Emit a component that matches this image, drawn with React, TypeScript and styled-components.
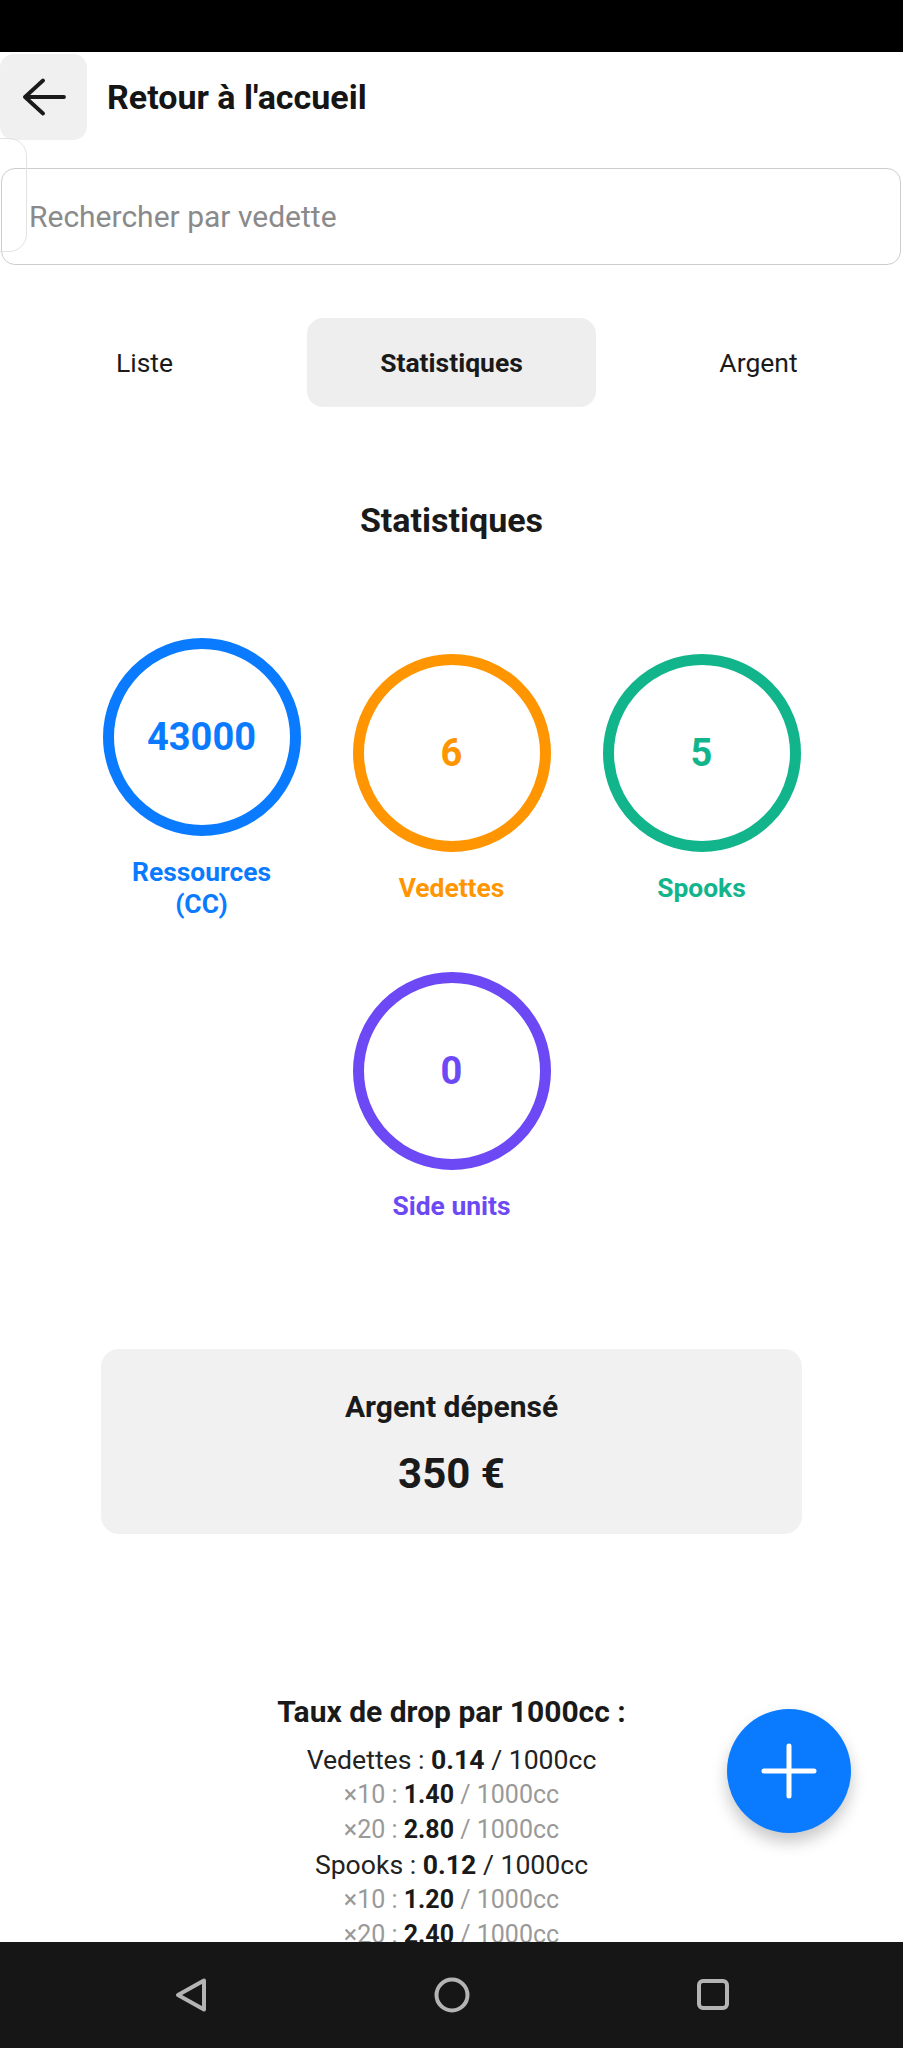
import React from "react";
import styled, { createGlobalStyle } from "styled-components";

const GlobalStyle = createGlobalStyle`
  html, body {
    margin: 0;
    padding: 0;
    background: #ffffff;
  }
  body {
    font-family: Roboto, "Noto Sans", "Liberation Sans", Arial, sans-serif;
    -webkit-font-smoothing: antialiased;
  }
  * { box-sizing: border-box; }
`;

const Screen = styled.div`
  position: relative;
  width: 903px;
  height: 2048px;
  display: flex;
  flex-direction: column;
  overflow: hidden;
  background: #ffffff;
`;

const StatusBar = styled.div`
  flex: 0 0 52px;
  background: #000000;
`;

const Content = styled.main`
  position: relative;
  flex: 1 1 auto;
  min-height: 0;
  overflow: hidden;
  display: flex;
  flex-direction: column;
  & > * {
    flex-shrink: 0;
  }
`;

const Header = styled.header`
  display: flex;
  align-items: center;
  gap: 20px;
  padding-top: 2px;
`;

const BackButton = styled.button`
  width: 87px;
  height: 86px;
  border: none;
  border-radius: 14px;
  background: #f0f0f0;
  display: flex;
  align-items: center;
  justify-content: center;
  padding: 0;
  cursor: pointer;
`;

const Title = styled.h1`
  margin: 0;
  font-size: 34px;
  font-weight: 700;
  color: #151515;
  line-height: 40px;
`;

const EdgeTrace = styled.div`
  position: absolute;
  left: -40px;
  top: 86px;
  width: 67px;
  height: 114px;
  border: 1.5px solid #e2e2e2;
  border-radius: 18px;
  pointer-events: none;
`;

const SearchInput = styled.input`
  display: block;
  width: 900px;
  height: 97px;
  margin: 28px 0 0 1px;
  padding: 0 27px;
  border: 1.5px solid #cdcdcd;
  border-radius: 14px;
  background: transparent;
  font-family: Roboto, "Noto Sans", Arial, sans-serif;
  font-size: 30px;
  color: #222222;
  outline: none;
  &::placeholder {
    color: #8a8a8a;
  }
`;

const Tabs = styled.nav`
  display: grid;
  grid-template-columns: repeat(3, 289px);
  column-gap: 18px;
  margin-top: 53px;
`;

const Tab = styled.button<{ $active?: boolean }>`
  height: 89px;
  border: none;
  border-radius: 16px;
  background: ${(p) => (p.$active ? "#eeeeee" : "transparent")};
  font-family: Roboto, "Noto Sans", Arial, sans-serif;
  font-size: 26.5px;
  font-weight: ${(p) => (p.$active ? 700 : 400)};
  color: #1a1a1a;
  padding: 0;
`;

const SectionTitle = styled.h2`
  margin: 93px 0 0;
  text-align: center;
  font-size: 34px;
  line-height: 41px;
  font-weight: 700;
  color: #1a1a1a;
`;

const StatsGrid = styled.section`
  display: flex;
  flex-wrap: wrap;
  justify-content: center;
  align-items: center;
  margin-top: 71px;
`;

const StatItem = styled.div`
  width: 198px;
  margin: 26px;
  display: flex;
  flex-direction: column;
  align-items: center;
`;

const Ring = styled.div<{ $color: string }>`
  width: 198px;
  height: 198px;
  border-radius: 50%;
  border: 11px solid ${(p) => p.$color};
  display: flex;
  align-items: center;
  justify-content: center;
  font-size: 38px;
  font-weight: 700;
  color: ${(p) => p.$color};
`;

const StatLabel = styled.div<{ $color: string }>`
  margin-top: 20px;
  max-width: 180px;
  text-align: center;
  font-size: 26.4px;
  line-height: 32px;
  font-weight: 700;
  color: ${(p) => p.$color};
`;

const MoneyCard = styled.section`
  margin: 101px 101px 0;
  padding: 40px 0 36px;
  border-radius: 18px;
  background: #f1f1f1;
  text-align: center;
`;

const MoneyTitle = styled.div`
  font-size: 30px;
  line-height: 35px;
  font-weight: 700;
  color: #1a1a1a;
`;

const MoneyValue = styled.div`
  margin-top: 26px;
  font-size: 42px;
  line-height: 48px;
  font-weight: 700;
  color: #1a1a1a;
`;

const DropSection = styled.section`
  margin-top: 159px;
  text-align: center;
`;

const DropTitle = styled.div`
  font-size: 30px;
  line-height: 37px;
  font-weight: 700;
  color: #1a1a1a;
  margin-bottom: 12px;
`;

const DropLine = styled.div<{ $sub?: boolean }>`
  font-size: ${(p) => (p.$sub ? "25px" : "26.6px")};
  line-height: 35px;
  color: ${(p) => (p.$sub ? "#999999" : "#222222")};
`;

const Strong = styled.b`
  font-weight: 700;
  color: #1a1a1a;
`;

const Fab = styled.button`
  position: absolute;
  right: 52px;
  bottom: 215px;
  width: 124px;
  height: 124px;
  border-radius: 50%;
  border: none;
  background: #0a7bff;
  box-shadow: 0 9px 16px rgba(0, 0, 0, 0.22);
  display: flex;
  align-items: center;
  justify-content: center;
  padding: 0;
`;

const NavBar = styled.footer`
  flex: 0 0 106px;
  background: #161616;
  display: flex;
  justify-content: center;
  align-items: center;
`;

const NavSlot = styled.div`
  width: 261px;
  display: flex;
  justify-content: center;
  align-items: center;
`;

type Stat = { value: string; label: string; color: string };

const stats: Stat[] = [
  { value: "43000", label: "Ressources (CC)", color: "#0a7bff" },
  { value: "6", label: "Vedettes", color: "#ff9500" },
  { value: "5", label: "Spooks", color: "#12b58b" },
  { value: "0", label: "Side units", color: "#6c49f5" },
];

type Drop = { label: string; value: string; sub?: boolean };

const drops: Drop[] = [
  { label: "Vedettes", value: "0.14" },
  { label: "×10", value: "1.40", sub: true },
  { label: "×20", value: "2.80", sub: true },
  { label: "Spooks", value: "0.12" },
  { label: "×10", value: "1.20", sub: true },
  { label: "×20", value: "2.40", sub: true },
];

const ArrowBack = () => (
  <svg width="44" height="38" viewBox="0 0 44 38" fill="none">
    <path
      d="M42 19H3M21 2.5L3 19l18 16.5"
      stroke="#1a1a1a"
      strokeWidth="3.8"
      strokeLinecap="round"
      strokeLinejoin="round"
    />
  </svg>
);

const PlusIcon = () => (
  <svg width="56" height="56" viewBox="0 0 56 56" fill="none">
    <path d="M28 3v50M3 28h50" stroke="#ffffff" strokeWidth="5" strokeLinecap="round" />
  </svg>
);

const NavBackIcon = () => (
  <svg width="36" height="38" viewBox="0 0 36 38" fill="none">
    <path
      d="M31 4.5L5 19l26 14.5z"
      stroke="#b4b4b4"
      strokeWidth="4"
      strokeLinejoin="round"
    />
  </svg>
);

const NavHomeIcon = () => (
  <svg width="38" height="38" viewBox="0 0 38 38" fill="none">
    <circle cx="19" cy="19" r="15.5" stroke="#b4b4b4" strokeWidth="4" />
  </svg>
);

const NavRecentIcon = () => (
  <svg width="36" height="36" viewBox="0 0 36 36" fill="none">
    <rect x="4" y="4" width="28" height="27" rx="4" stroke="#b4b4b4" strokeWidth="4" />
  </svg>
);

export default function App() {
  return (
    <>
      <GlobalStyle />
      <Screen>
        <StatusBar />
        <Content>
          <Header>
            <BackButton aria-label="Retour">
              <ArrowBack />
            </BackButton>
            <Title>Retour à l'accueil</Title>
          </Header>
          <EdgeTrace />
          <SearchInput placeholder="Rechercher par vedette" />
          <Tabs>
            <Tab>Liste</Tab>
            <Tab $active>Statistiques</Tab>
            <Tab>Argent</Tab>
          </Tabs>
          <SectionTitle>Statistiques</SectionTitle>
          <StatsGrid>
            {stats.map((s) => (
              <StatItem key={s.label}>
                <Ring $color={s.color}>{s.value}</Ring>
                <StatLabel $color={s.color}>{s.label}</StatLabel>
              </StatItem>
            ))}
          </StatsGrid>
          <MoneyCard>
            <MoneyTitle>Argent dépensé</MoneyTitle>
            <MoneyValue>350 €</MoneyValue>
          </MoneyCard>
          <DropSection>
            <DropTitle>Taux de drop par 1000cc :</DropTitle>
            {drops.map((d, i) => (
              <DropLine key={i} $sub={d.sub}>
                {d.label} : <Strong>{d.value}</Strong> / 1000cc
              </DropLine>
            ))}
          </DropSection>
        </Content>
        <Fab aria-label="Ajouter">
          <PlusIcon />
        </Fab>
        <NavBar>
          <NavSlot>
            <NavBackIcon />
          </NavSlot>
          <NavSlot>
            <NavHomeIcon />
          </NavSlot>
          <NavSlot>
            <NavRecentIcon />
          </NavSlot>
        </NavBar>
      </Screen>
    </>
  );
}
